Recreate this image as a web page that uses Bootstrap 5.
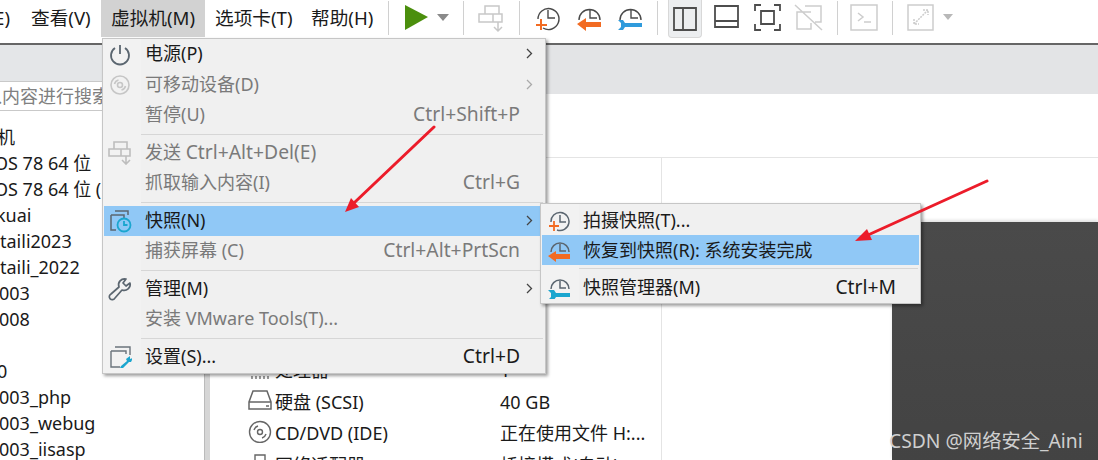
<!DOCTYPE html>
<html lang="zh"><head><meta charset="utf-8">
<link href="https://cdn.jsdelivr.net/npm/bootstrap@5.3.0/dist/css/bootstrap.min.css" rel="stylesheet">
<style>
html,body{height:460px;overflow:hidden;background:#fff}
body{position:relative;width:1098px;font-family:"Noto Sans","Noto Sans CJK SC",sans-serif;font-size:18px;color:#1a1a1a;line-height:26px}
.tb{height:45px;border-bottom:2px solid #666;background:#fff;font-size:18.67px}
.tb-menu{height:37px;line-height:35px;flex:none;white-space:nowrap}
.mi-e{width:10px;overflow:hidden;display:flex;justify-content:flex-end}
.mi-v{margin-left:21px;width:70px}
.mi-m{width:104px;background:#d2d2d2;padding-left:10px}
.mi-t{margin-left:10px;width:96px}
.mi-h{width:77px}
.tsep{width:1px;height:34px;background:#d0d0d0;flex:none;margin-top:1px}
.tico{flex:none;display:block}
.act{width:34px;height:38px;background:#eceef0;border:1px solid #d8d8d8;border-top:0;border-radius:0 0 4px 4px;display:flex;align-items:center;justify-content:center;flex:none;margin-left:10px}
.bodyrow{height:415px}
.side{width:204px;flex:none;overflow:hidden}
.sgray{height:36px;background:#e4e6e8}
.ssearch{height:30px;border-bottom:1px solid #c9c9c9;border-top:1px solid #c9c9c9;color:#808080;line-height:29px;white-space:nowrap;overflow:hidden;text-indent:-16px}
.slist{padding-top:13px}
.slist div{height:26px;line-height:26px;white-space:nowrap;overflow:hidden}
.i1{text-indent:-1px}
.i3{text-indent:-3px}
.i4{text-indent:-4px}
.i6{text-indent:-6px}
.sbar{width:6px;background:#d6d6d6;border-left:1px solid #bbb;flex:none}
.mainp{flex:1;min-width:0;overflow:hidden}
.mgray{height:49px;background:#e3e4e6}
.mtop{height:64px;border-bottom:1px solid #e4e4e4}
.mbody{height:302px}
.mleft{width:452px;border-right:1px solid #e4e4e4;flex:none;padding:198px 0 0 38px}
.dev{height:31.5px;line-height:28px;white-space:nowrap}
.dev svg{flex:none;margin-right:3px}
.devn{width:225px;flex:none}
.mright{flex:1;min-width:0;padding-top:64px;padding-left:230px}
.vmthumb{height:238px;background:linear-gradient(#4a4a4a,#434343);box-shadow:0 -2px 3px rgba(0,0,0,.12)}
.vm-menu{position:absolute;background:linear-gradient(90deg,#f2f2f2 38px,#f0f0f0 38px);border:1px solid #c6c6c6;border-radius:0;padding:0;margin:0;box-shadow:2px 2px 3px rgba(0,0,0,.38);font-size:18px;display:block;min-width:0;color:#1a1a1a}
.m1{left:102px;top:38px;width:444px;height:336px}
.m2{left:540px;top:203px;width:381px;height:101px;padding-top:1px}
.ent{height:30.5px;line-height:28px;padding:0 24px 0 41px;display:flex;justify-content:space-between;color:#1a1a1a;white-space:nowrap;position:relative;margin:0 1px;width:auto;background:none}
.m2 .ent{height:30px;line-height:30px;padding:0 23px 0 41px}
.ent.off{color:#7a7a7a}
.ent.hl{background:#90c8f6}
.ent svg.mic{position:absolute;left:4px;top:3px}
.m2 .ent svg.mic{left:5px;top:3px}
.chev{position:absolute;right:11px;top:9px}
.msep{height:1px;background:#d6d6d6;margin:3px 2px 3px 38px;opacity:1;border:0}
.lt{font-size:19.3px}
.ovl{position:absolute;left:0;top:0;pointer-events:none;z-index:1001}
.wm{position:absolute;left:889px;top:429px;color:#cfcfcf;font-size:19.3px;line-height:24px;white-space:nowrap;z-index:1001}
</style></head><body>
<div class="tb d-flex align-items-start">
 <div class="tb-menu mi-e"><span class="flex-shrink-0">E)</span></div>
 <div class="tb-menu mi-v">查看(V)</div>
 <div class="tb-menu mi-m">虚拟机(M)</div>
 <div class="tb-menu mi-t">选项卡(T)</div>
 <div class="tb-menu mi-h">帮助(H)</div>
 <div class="tsep"></div>
 <svg class="tico" width="74" height="36" viewBox="389 0 74 36"><path d="M405 5L428 17L405 30Z" fill="#4b8f0d"/><path d="M437 14H449L443 21Z" fill="#8a8a8a"/></svg>
 <div class="tsep"></div>
 <svg class="tico" width="55" height="36" viewBox="464 0 55 36"><g fill="none" stroke="#c8c8c8" stroke-width="1.5"><path d="M485 6h14v8h-14zM479 14h14v8h-14zM493 14h9v8h-9zM498 22v9M494 27l4 4 4-4"/></g></svg>
 <div class="tsep"></div>
 <svg class="tico" width="137" height="36" viewBox="520 0 137 36"><g fill="none" stroke="#4a4a4a" stroke-width="1.400"><path d="M538 19a10.500 10.500 0 1 1 5 9M548 10v8h7"/><path d="M579 20a10.500 10.500 0 1 1 21 0M590 10v8h7"/><path d="M620 20a10.500 10.500 0 1 1 21 0M631 10v8h7"/></g><path d="M541 19v11M536 25h11" stroke="#f26b22" stroke-width="2" fill="none"/><path d="M577 24l9-6v4h15v5h-15v4z" fill="#f26b22"/><path d="M618 20h5l2 3h17v4h-17l-2 3h-5l3-3v-4z" fill="#2f9bdc"/></svg>
 <div class="tsep"></div>
 <div class="act"><svg width="24" height="24" viewBox="0 0 24 24"><path d="M1 1h22v22H1zM10 1v22" fill="none" stroke="#4d4d4d" stroke-width="1.800"/></svg></div>
 <svg class="tico" width="135" height="36" viewBox="702 0 135 36"><g fill="none" stroke="#4d4d4d" stroke-width="1.800"><path d="M715 6h23v21h-23zM715 21h23"/><path d="M755 11V5h6M774 5h6v6M755 24v6h6M774 30h6v-6M761 11h13v13h-13z"/></g><g fill="none" stroke="#cdcdcd" stroke-width="1.500"><path d="M805 6h16v16h-6M811 12h-14v17h14v-6M795 5l27 25"/></g></svg>
 <div class="tsep"></div>
 <svg class="tico" width="54" height="36" viewBox="838 0 54 36"><g fill="none" stroke="#cdcdcd" stroke-width="1.500"><path d="M851 5h26v25h-26zM858 13l5 4-5 4M864 22h7"/></g></svg>
 <div class="tsep"></div>
 <svg class="tico" width="70" height="36" viewBox="893 0 70 36"><g fill="none" stroke="#cdcdcd" stroke-width="1.500"><path d="M908 5h25v25h-25z"/><path d="M914 24l14-14M923 10h5v5M914 19v5h5" stroke-dasharray="2 1"/></g><path d="M943 14H953L948 20Z" fill="#b8b8b8"/></svg>
</div>
<div class="bodyrow d-flex">
 <div class="side">
  <div class="sgray"></div>
  <div class="ssearch">入内容进行搜索</div>
  <div class="slist">
   <div class="i3">机</div><div class="i6">OS 78 64 位</div><div class="i6">OS 78 64 位 (</div><div class="i4">kuai</div><div>taili2023</div><div>taili_2022</div><div class="i1">003</div><div class="i1">008</div><div></div><div class="i3">0</div><div class="i1">003_php</div><div class="i1">003_webug</div><div class="i1">003_iisasp</div>
  </div>
 </div>
 <div class="sbar"></div>
 <div class="mainp">
  <div class="mgray"></div>
  <div class="mtop"></div>
  <div class="mbody d-flex">
   <div class="mleft">
    <div class="dev d-flex"><svg width="24" height="24" viewBox="0 0 24 24"><path d="M4 4h16v13H4zM4 20v3M8 20v3M12 20v3M16 20v3M20 20v3" fill="none" stroke="#666" stroke-width="1.300"/></svg><span class="devn">处理器</span><span>1</span></div>
    <div class="dev d-flex"><svg width="24" height="24" viewBox="0 0 24 24"><path d="M5 3h14l4 11v7H1v-7zM1 14h22M18 18h3" fill="none" stroke="#666" stroke-width="1.500"/></svg><span class="devn">硬盘 (SCSI)</span><span>40 GB</span></div>
    <div class="dev d-flex"><svg width="24" height="24" viewBox="0 0 24 24"><g fill="none" stroke="#666" stroke-width="1.400"><circle cx="12" cy="13" r="10.500"/><circle cx="12" cy="13" r="2.500"/><path d="M6 11a6 6 0 0 1 4-4M18 15a6 6 0 0 1-4 4"/></g></svg><span class="devn">CD/DVD (IDE)</span><span>正在使用文件 H:...</span></div>
    <div class="dev d-flex"><svg width="24" height="24" viewBox="0 0 24 24"><path d="M7 4h10v10H7z" fill="none" stroke="#666" stroke-width="1.400"/></svg><span class="devn">网络适配器</span><span>桥接模式(自动)</span></div>
   </div>
   <div class="mright"><div class="vmthumb"></div></div>
  </div>
 </div>
</div>

<div class="dropdown-menu show vm-menu m1">
 <div class="dropdown-item ent"><svg class="mic" width="24" height="24" viewBox="0 0 24 24"><g fill="none" stroke="#5b6670" stroke-width="1.800"><path d="M7 6a9 9 0 1 0 10 0M12 3v9"/></g></svg><span>电源(P)</span><svg class="chev" width="7" height="11" viewBox="0 0 7 11"><path d="M1 1l4.500 4.500L1 10" fill="none" stroke="#444" stroke-width="1.300"/></svg></div>
 <div class="dropdown-item ent off"><svg class="mic" width="24" height="24" viewBox="0 0 24 24"><g fill="none" stroke="#c6c6c6" stroke-width="1.600"><circle cx="12" cy="12" r="9"/><circle cx="12" cy="12" r="2.500"/><path d="M6.500 11a5.500 5.500 0 0 1 4-4M17.500 13a5.500 5.500 0 0 1-4 4"/></g></svg><span>可移动设备(D)</span><svg class="chev" width="7" height="11" viewBox="0 0 7 11"><path d="M1 1l4.500 4.500L1 10" fill="none" stroke="#aaa" stroke-width="1.300"/></svg></div>
 <div class="dropdown-item ent off"><span>暂停(U)</span><span class="lt">Ctrl+Shift+P</span></div>
 <hr class="dropdown-divider msep">
 <div class="dropdown-item ent off"><svg class="mic" width="24" height="24" viewBox="0 0 24 24"><g fill="none" stroke="#bdbdbd" stroke-width="1.600"><path d="M6 1h13v7H6zM1 8h12v7H1zM13 8h9v7h-9zM18 15v8M14 19l4 4 4-4"/></g></svg><span>发送 <span class="lt">Ctrl+Alt+Del(E)</span></span></div>
 <div class="dropdown-item ent off"><span>抓取输入内容(I)</span><span class="lt">Ctrl+G</span></div>
 <hr class="dropdown-divider msep">
 <div class="dropdown-item ent hl"><svg class="mic" width="24" height="24" viewBox="0 0 24 24"><g fill="none" stroke="#5b6670" stroke-width="1.500"><path d="M7 2h13v4M3 6h13v3M3 6v15h5"/></g><g fill="none" stroke="#1ba6cf" stroke-width="1.800"><circle cx="16" cy="16" r="6.500"/><path d="M16 12v4h3.500"/></g></svg><span>快照(N)</span><svg class="chev" width="7" height="11" viewBox="0 0 7 11"><path d="M1 1l4.500 4.500L1 10" fill="none" stroke="#444" stroke-width="1.300"/></svg></div>
 <div class="dropdown-item ent off"><span>捕获屏幕 (C)</span><span class="lt">Ctrl+Alt+PrtScn</span></div>
 <hr class="dropdown-divider msep">
 <div class="dropdown-item ent"><svg class="mic" width="24" height="24" viewBox="0 0 24 24"><path d="M22 6l-4 3-3-3 3-4a6 6 0 0 0-7 8L3 17a3 3 0 1 0 4 4l7-8a6 6 0 0 0 8-7z" fill="none" stroke="#5b6670" stroke-width="1.700" stroke-linejoin="round"/></svg><span>管理(M)</span><svg class="chev" width="7" height="11" viewBox="0 0 7 11"><path d="M1 1l4.500 4.500L1 10" fill="none" stroke="#444" stroke-width="1.300"/></svg></div>
 <div class="dropdown-item ent off"><span>安装 VMware Tools(T)...</span></div>
 <hr class="dropdown-divider msep">
 <div class="dropdown-item ent"><svg class="mic" width="24" height="24" viewBox="0 0 24 24"><g fill="none" stroke="#6b747c" stroke-width="1.400"><path d="M7 2h15v8M3 6h15v3M3 6v16h9"/></g><path d="M22 11l-4 3 1 2-6 5-1 2h3l6-6 2 0 2-4-3 1z" fill="#1ba6cf"/></svg><span>设置(S)...</span><span class="lt">Ctrl+D</span></div>
</div>

<div class="dropdown-menu show vm-menu m2">
 <div class="dropdown-item ent"><svg class="mic" width="24" height="24" viewBox="0 0 24 24"><g fill="none" stroke="#5b6670" stroke-width="1.500"><path d="M4 14a9 9 0 1 1 6 8M13 7v7h6"/></g><path d="M7 13v10M2 18h10" stroke="#f26b22" stroke-width="1.800" fill="none"/></svg><span>拍摄快照(T)...</span></div>
 <div class="dropdown-item ent hl"><svg class="mic" width="24" height="24" viewBox="0 0 24 24"><g fill="none" stroke="#5b6670" stroke-width="1.500"><path d="M4 14a9 9 0 1 1 18 0M13 6v7h6"/></g><path d="M1 18l8-5v3h14v5H9v3z" fill="#f26b22"/></svg><span>恢复到快照(R): 系统安装完成</span></div>
 <hr class="dropdown-divider msep">
 <div class="dropdown-item ent"><svg class="mic" width="24" height="24" viewBox="0 0 24 24"><g fill="none" stroke="#5b6670" stroke-width="1.500"><path d="M4 14a9 9 0 1 1 18 0M13 6v7h6"/></g><path d="M1 15h6l2 3h14v4H9l-2 3H1l3-3v-4z" fill="#1ba6cf"/></svg><span>快照管理器(M)</span><span class="lt">Ctrl+M</span></div>
</div>

<svg class="ovl" width="1098" height="460" viewBox="0 0 1098 460">
 <path d="M434 127L355 202M987 181L868 235" stroke="#ec1c2a" stroke-width="3" stroke-linecap="round" fill="none"/>
 <path d="M345 212L359 207L351 198Z" fill="#ec1c2a"/>
 <path d="M855 241L872 240L867 229Z" fill="#ec1c2a"/>
</svg>
<div class="wm">CSDN @网络安全_Aini</div>
</body></html>
